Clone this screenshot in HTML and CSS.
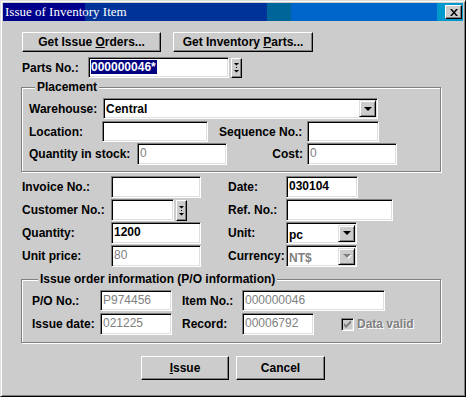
FILE: index.html
```html
<!DOCTYPE html>
<html>
<head>
    <title>Issue of Inventory Item</title>
    <link rel="stylesheet" href="styles.css">
</head>
<body>
    <div class="window">
        <div class="titlebar">
            <span class="title">Issue of Inventory Item</span>
            <span class="close">
                <svg width="8" height="7" viewBox="0 0 8 7"><path d="M0 0h2l2 2.5L6 0h2L5 3.5 8 7H6L4 4.5 2 7H0l3-3.5z" fill="#000"/></svg>
            </span>
        </div>

        <div class="content">
            <div class="row top-buttons">
                <button class="btn btn-orders">Get Issue <u>O</u>rders...</button>
                <button class="btn btn-parts">Get Inventory <u>P</u>arts...</button>
            </div>

            <div class="row parts-row">
                <span class="lbl w-parts">Parts No.:</span>
                <div class="edit w-141"><span class="sel">000000046*</span></div>
                <div class="spin">
                    <svg width="5" height="11" viewBox="0 0 5 11"><path d="M0 1h5L2.5 3.5z M2 5h1v1H2z M0 8h5L2.5 10.5z" fill="#000"/></svg>
                </div>
            </div>

            <div class="group placement">
                <span class="legend">Placement</span>
                <div class="row h21 first">
                    <span class="lbl w-74">Warehouse:</span>
                    <div class="edit combo w-275">
                        <span>Central</span>
                        <span class="drop"><i class="arrow"></i></span>
                    </div>
                </div>
                <div class="row h21 gap2">
                    <span class="lbl w-73">Location:</span>
                    <div class="edit w-106"></div>
                    <span class="lbl w-88 ml-11">Sequence No.:</span>
                    <div class="edit w-72"></div>
                </div>
                <div class="row h22 gap1">
                    <span class="lbl w-108">Quantity in stock:</span>
                    <div class="edit off w-90">0</div>
                    <span class="lbl w-80 right">Cost:</span>
                    <div class="edit off w-90">0</div>
                </div>
            </div>

            <div class="row h22 order-first">
                <div class="half">
                    <span class="lbl w-89">Invoice No.:</span>
                    <div class="edit w-90"></div>
                </div>
                <span class="lbl w-58">Date:</span>
                <div class="edit w-72">030104</div>
            </div>
            <div class="row h22 gap1">
                <div class="half">
                    <span class="lbl w-89">Customer No.:</span>
                    <div class="edit w-63"></div>
                    <div class="spin small">
                        <svg width="5" height="11" viewBox="0 0 5 11"><path d="M0 1h5L2.5 3.5z M2 5h1v1H2z M0 8h5L2.5 10.5z" fill="#000"/></svg>
                    </div>
                </div>
                <span class="lbl w-58">Ref. No.:</span>
                <div class="edit w-107"></div>
            </div>
            <div class="row h22 gap1">
                <div class="half">
                    <span class="lbl w-89">Quantity:</span>
                    <div class="edit w-90">1200</div>
                </div>
                <span class="lbl w-58">Unit:</span>
                <div class="edit combo w-71">
                    <span class="low">pc</span>
                    <span class="drop"><i class="arrow"></i></span>
                </div>
            </div>
            <div class="row h22 gap1">
                <div class="half">
                    <span class="lbl w-89">Unit price:</span>
                    <div class="edit off w-90">80</div>
                </div>
                <span class="lbl w-58">Currency:</span>
                <div class="edit combo w-71">
                    <span class="low dim">NT$</span>
                    <span class="drop"><i class="arrow dim-arrow"></i></span>
                </div>
            </div>

            <div class="group issue-info">
                <span class="legend">Issue order information (P/O information)</span>
                <div class="row h21 first">
                    <span class="lbl w-68">P/O No.:</span>
                    <div class="edit off w-72">P974456</div>
                    <span class="lbl w-60 ml-10">Item No.:</span>
                    <div class="edit off w-143">000000046</div>
                </div>
                <div class="row h22 gap2">
                    <span class="lbl w-68">Issue date:</span>
                    <div class="edit off w-72">021225</div>
                    <span class="lbl w-60 ml-10">Record:</span>
                    <div class="edit off w-72">00006792</div>
                    <span class="check">
                        <svg width="7" height="7" viewBox="0 0 7 7"><path d="M0 2v3l2 2 5-5V-1L2 4z" fill="#808080"/></svg>
                    </span>
                    <span class="dim">Data valid</span>
                </div>
            </div>

            <div class="row bottom-buttons">
                <button class="btn btn-issue"><u>I</u>ssue</button>
                <button class="btn btn-cancel">Cancel</button>
            </div>
        </div>
    </div>
</body>
</html>
```

FILE: styles.css
```css
body {
    margin: 0;
    font-family: "Liberation Sans", Arial, sans-serif;
    font-size: 12px;
    font-weight: bold;
    color: #000;
}
.window {
    width: 466px;
    height: 397px;
    box-sizing: border-box;
    background: #cccccc;
    border: 1px solid;
    border-color: #dfdfdf #000 #000 #dfdfdf;
    box-shadow: inset 1px 1px #fff, inset -1px -1px #808080;
    padding: 2px;
}
.titlebar {
    height: 18px;
    display: flex;
    align-items: center;
    justify-content: space-between;
    padding: 0 1px 0 2px;
    background: linear-gradient(to right, #00008b 0 82px, #003399 82px 264px, #006699 264px 288px, #0066cc 288px 434px, #0099cc 434px);
}
.title {
    color: #fff;
    font-family: "Liberation Serif", "Times New Roman", serif;
    font-weight: normal;
    font-size: 13px;
}
.close {
    box-sizing: border-box;
    width: 17px;
    height: 14px;
    display: flex;
    align-items: center;
    justify-content: center;
    background: #cccccc;
    border: 1px solid;
    border-color: #fff #000 #000 #fff;
    box-shadow: inset -1px -1px #808080;
}
.content {
    padding: 11px 0 0 19px;
}
.row {
    display: flex;
    align-items: center;
}
.h21 { height: 21px; }
.h22 { height: 22px; }
.gap1 { margin-top: 1px; }
.gap2 { margin-top: 2px; }
.first { margin-top: 4px; }

/* buttons */
.btn {
    box-sizing: border-box;
    height: 20px;
    padding: 0;
    background: #cccccc;
    border: 1px solid;
    border-color: #fff #000 #000 #fff;
    box-shadow: inset -1px -1px #808080;
    font: inherit;
    color: #000;
}
.top-buttons { gap: 12px; }
.btn-orders { width: 139px; }
.btn-parts { width: 140px; }
.bottom-buttons {
    justify-content: center;
    gap: 7px;
    margin: 13px 0 0 -19px;
}
.btn-issue { width: 88px; height: 24px; }
.btn-cancel { width: 89px; height: 24px; }

/* labels */
.lbl { flex: none; white-space: nowrap; }
.right { text-align: right; padding-right: 4px; box-sizing: border-box; }
.w-parts { width: 66px; }
.w-58 { width: 58px; }
.w-60 { width: 60px; }
.w-63 { width: 63px; }
.w-68 { width: 68px; }
.w-71 { width: 71px; }
.w-72 { width: 72px; }
.w-73 { width: 73px; }
.w-74 { width: 74px; }
.w-80 { width: 80px; }
.w-88 { width: 88px; }
.w-89 { width: 89px; }
.w-90 { width: 90px; }
.w-106 { width: 106px; }
.w-107 { width: 107px; }
.w-108 { width: 108px; }
.w-141 { width: 141px; }
.w-143 { width: 143px; }
.w-275 { width: 275px; }
.ml-10 { margin-left: 10px; }
.ml-11 { margin-left: 11px; }

/* edit boxes */
.edit {
    flex: none;
    box-sizing: border-box;
    height: 100%;
    background: #fff;
    border: 1px solid;
    border-color: #808080 #fff #fff #808080;
    box-shadow: inset 1px 1px #000, inset -1px -1px #dfdfdf;
    padding: 0 2px 2px 2px;
    display: flex;
    align-items: center;
    line-height: 14px;
}
.edit.off {
    color: #808080;
    font-weight: normal;
}
.sel {
    background: #000080;
    color: #fff;
    padding-right: 1px;
}
.parts-row {
    height: 21px;
    margin-top: 5px;
}
.parts-row .edit { height: 21px; }
.spin {
    box-sizing: border-box;
    width: 11px;
    height: 20px;
    margin-left: 2px;
    display: flex;
    align-items: center;
    justify-content: center;
    background: #cccccc;
    border: 1px solid;
    border-color: #fff #000 #000 #fff;
    box-shadow: inset -1px -1px #808080;
}
.spin.small { height: 21px; }

/* combo boxes */
.combo {
    justify-content: space-between;
    padding-right: 1px;
    padding-bottom: 0;
}
.combo .low { padding-top: 3px; }
.drop {
    box-sizing: border-box;
    width: 17px;
    height: 17px;
    display: flex;
    align-items: center;
    justify-content: center;
    background: #cccccc;
    border: 1px solid;
    border-color: #dfdfdf #000 #000 #dfdfdf;
    box-shadow: inset 1px 1px #fff, inset -1px -1px #808080;
}
.arrow {
    width: 0;
    height: 0;
    border-left: 4px solid transparent;
    border-right: 4px solid transparent;
    border-top: 4px solid #000;
}
.arrow.dim-arrow {
    border-top-color: #808080;
    filter: drop-shadow(1px 1px 0 #fff);
}
.dim {
    color: #808080;
    text-shadow: 1px 1px 0 #fff;
}

/* group boxes */
.group {
    box-sizing: border-box;
    width: 420px;
    margin-left: -1px;
    border: 1px solid #808080;
    box-shadow: inset 1px 1px #fff, 1px 1px #fff;
}
.legend {
    display: table;
    margin: -8px 0 0 6px;
    padding: 0 2px;
    background: #cccccc;
    line-height: 14px;
}
.placement {
    margin-top: 9px;
    padding: 0 0 6px 7px;
}
.order-first { margin-top: 4px; }
.half {
    width: 206px;
    display: flex;
    align-items: center;
    height: 100%;
}
.issue-info {
    margin-top: 12px;
    padding: 0 0 7px 10px;
}
.check {
    box-sizing: border-box;
    width: 13px;
    height: 13px;
    margin: 0 3px 0 27px;
    display: flex;
    align-items: center;
    justify-content: center;
    background: #cccccc;
    border: 1px solid;
    border-color: #808080 #fff #fff #808080;
    box-shadow: inset 1px 1px #000, inset -1px -1px #dfdfdf;
}
```
